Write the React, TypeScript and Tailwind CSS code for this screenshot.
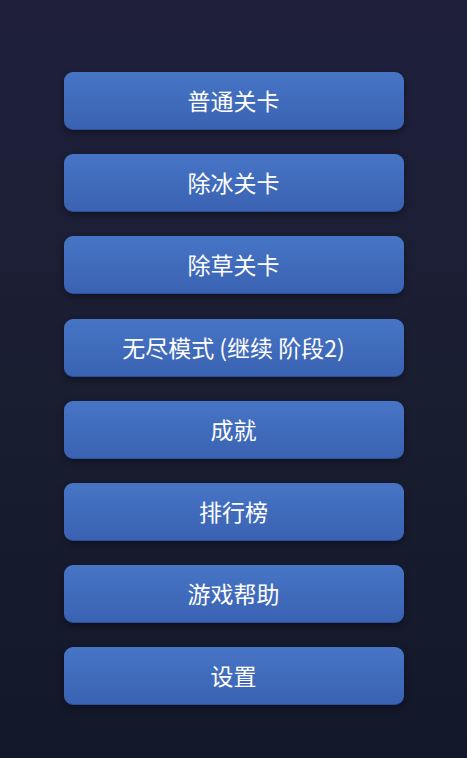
import React from "react";

const items = ["普通关卡", "除冰关卡", "除草关卡", "无尽模式 (继续 阶段2)", "成就", "排行榜", "游戏帮助", "设置"];

export default function App() {
  return (
    <div
      className="w-[467px] h-[758px] bg-gradient-to-b from-[#1f1f3c] via-[#1a1e31] to-[#13172a] flex flex-col items-center pt-[72px] gap-[24.2px]"
      style={{ fontFamily: '"Noto Sans CJK SC", "Noto Sans", sans-serif' }}
    >
      {items.map((t) => (
        <button
          key={t}
          className="w-[340px] h-[58px] shrink-0 rounded-[9px] bg-gradient-to-b from-[#4775c6] to-[#3a62b2] text-white text-[23px] leading-none flex items-center justify-center shadow-[0_3px_6px_rgba(0,0,0,0.35)] border-b border-[#2d4f99]"
        >
          {t}
        </button>
      ))}
    </div>
  );
}
